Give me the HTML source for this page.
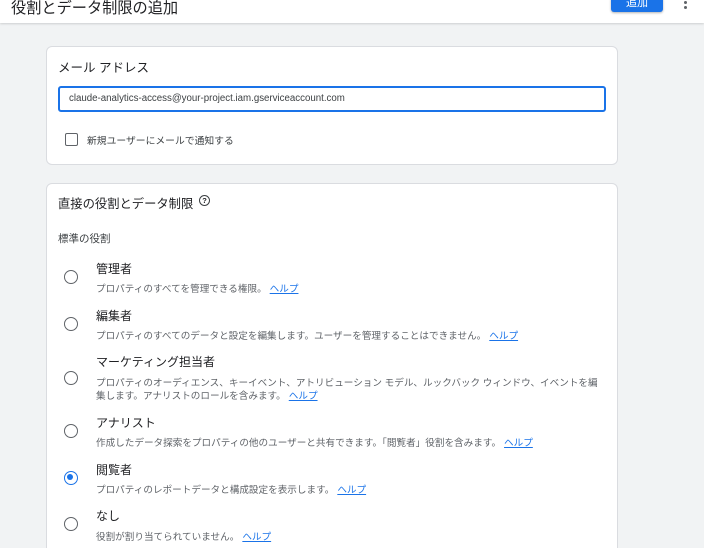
<!DOCTYPE html>
<html><head><meta charset="utf-8"><style>
*{margin:0;padding:0;box-sizing:border-box}
html,body{width:704px;height:548px;overflow:hidden}
body{background:#f1f3f4;font-family:"Liberation Sans","Noto Sans CJK JP",sans-serif;color:#202124;position:relative}
.a{position:absolute;white-space:nowrap}
.hdr{position:absolute;left:0;top:0;width:704px;height:23px;background:#fff;box-shadow:0 1px 2px rgba(0,0,0,.15)}
.card{position:absolute;left:46px;width:572px;background:#fff;border:1px solid #dadce0;border-radius:6px}
.radio{position:absolute;left:64px;width:14px;height:14px;border:1.6px solid #5f6368;border-radius:50%}
.t{font-size:12px;color:#202124}
.d{font-size:9.6px;color:#5f6368}
.d a{color:#1a73e8;text-decoration:underline;margin-left:3px}
</style></head><body>
<div class="hdr"></div>
<div class="a" style="left:11px;top:-4px;font-size:15.2px;color:#202124">役割とデータ制限の追加</div>
<div class="a" style="left:611px;top:-4px;width:52px;height:16px;background:#1a73e8;border-radius:3px;color:#fff;font-size:11px;text-align:center;line-height:14px;box-shadow:0 1px 2px rgba(0,0,0,.3)">追加</div>
<div class="a" style="left:684px;top:1px;width:3px;height:3px;background:#5f6368;border-radius:50%"></div>
<div class="a" style="left:684px;top:6px;width:3px;height:3px;background:#5f6368;border-radius:50%"></div>

<div class="card" style="top:46px;height:119px"></div>
<div class="a" style="left:58px;top:57px;font-size:12.5px">メール アドレス</div>
<div class="a" style="left:58px;top:86px;width:548px;height:26px;border:2px solid #1a73e8;border-radius:3px"></div>
<div class="a" style="left:69px;top:92px;font-size:9.7px;line-height:13px;color:#3c4043">claude-analytics-access@your-project.iam.gserviceaccount.com</div>
<div class="a" style="left:65px;top:133px;width:13px;height:13px;border:1.8px solid #5f6368;border-radius:2px"></div>
<div class="a" style="left:87px;top:133px;font-size:9.8px;color:#3c4043">新規ユーザーにメールで通知する</div>

<div class="card" style="top:183px;height:380px"></div>
<div class="a" style="left:58px;top:194px;font-size:12.3px">直接の役割とデータ制限</div>
<div class="a" style="left:199px;top:195px;width:11px;height:11px;border:1.3px solid #3c4043;border-radius:50%;font-size:7.5px;line-height:9px;text-align:center;font-weight:bold">?</div>
<div class="a" style="left:58px;top:231px;font-size:10.5px;color:#3c4043">標準の役割</div>

<div class="radio" style="top:270px"></div>
<div class="a t" style="left:96px;top:260px">管理者</div>
<div class="a d" style="left:96px;top:281px">プロパティのすべてを管理できる権限。<a>ヘルプ</a></div>

<div class="radio" style="top:317px"></div>
<div class="a t" style="left:96px;top:307px">編集者</div>
<div class="a d" style="left:96px;top:328px">プロパティのすべてのデータと設定を編集します。ユーザーを管理することはできません。<a>ヘルプ</a></div>

<div class="radio" style="top:371px"></div>
<div class="a t" style="left:96px;top:353px">マーケティング担当者</div>
<div class="a d" style="left:96px;top:375px">プロパティのオーディエンス、キーイベント、アトリビューション モデル、ルックバック ウィンドウ、イベントを編</div>
<div class="a d" style="left:96px;top:388px">集します。アナリストのロールを含みます。<a>ヘルプ</a></div>

<div class="radio" style="top:424px"></div>
<div class="a t" style="left:96px;top:414px">アナリスト</div>
<div class="a d" style="left:96px;top:435px">作成したデータ探索をプロパティの他のユーザーと共有できます。「閲覧者」役割を含みます。<a>ヘルプ</a></div>

<div class="radio" style="top:471px;border-color:#1a73e8"><div style="position:absolute;left:2.4px;top:2.4px;width:6px;height:6px;background:#1a73e8;border-radius:50%"></div></div>
<div class="a t" style="left:96px;top:461px">閲覧者</div>
<div class="a d" style="left:96px;top:482px">プロパティのレポートデータと構成設定を表示します。<a>ヘルプ</a></div>

<div class="radio" style="top:517px"></div>
<div class="a t" style="left:96px;top:507px">なし</div>
<div class="a d" style="left:96px;top:529px">役割が割り当てられていません。<a>ヘルプ</a></div>
</body></html>
